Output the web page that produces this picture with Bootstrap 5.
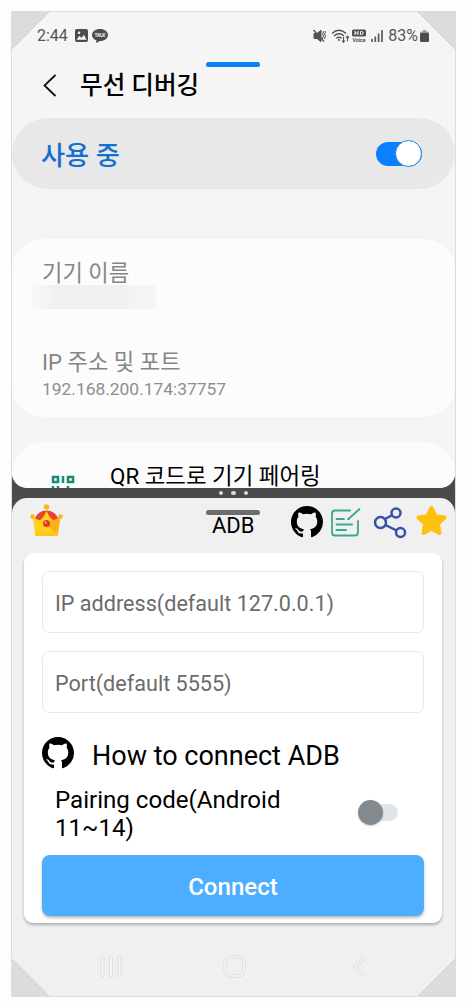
<!DOCTYPE html>
<html lang="ko">
<head>
<meta charset="utf-8">
<meta name="viewport" content="width=device-width, initial-scale=1">
<title>ADB</title>
<link href="https://cdn.jsdelivr.net/npm/bootstrap@5.3.0/dist/css/bootstrap.min.css" rel="stylesheet">
<style>
body{background:#fdfdfd;font-family:Roboto,"Noto Sans CJK KR",sans-serif;color:#000;overflow:hidden}
svg{display:block;flex:none}
.phone{width:445px;height:986px;margin:11px 0 0 11px;background:#4b4b4b;border:1px solid #dcdcdc;overflow:hidden;line-height:1}
.fold{width:40px;height:40px}
.fold-tl{left:-1px;top:-1px}.fold-tr{right:-1px;top:-1px}.fold-bl{left:-1px;bottom:-1px}.fold-br{right:-1px;bottom:-1px}
.pane-top{height:476px;background:#f5f5f5;border-radius:0 0 15px 15px}
.pane-bottom{height:498px;background:#f0f0f0;border-radius:15px 15px 0 0}
.divider{height:10px;gap:8px}
.divider i{width:4.5px;height:4.5px;border-radius:50%;background:#d9d9d9}
.statusbar{height:47px;padding:0 26px 0 25px;font-size:16px;color:#555}
.handle{width:54px;height:5px;border-radius:3px}
.handle-blue{background:#0b81f1;top:50px;left:194px}
.handle-gray{background:#6c6c6c;top:12px;left:194px}
.titlebar{height:59px;padding:0 0 7px 31px;gap:23px}
.titlebar h1{font-size:24.6px;font-weight:500;line-height:1;padding-top:3px}
.using{height:71px;border-radius:36px;background:#e8e8e8;padding:0 33px 0 29px;color:#146fd0;font-size:26.2px;font-weight:500}
.toggle-on{width:46px;height:24px;border-radius:12px;background:#0a80ff}
.toggle-on b{width:27px;height:27px;border-radius:50%;background:#fff;border:1px solid #2383e0}
.panel{background:#fcfcfc;border-radius:32px}
.info{margin-top:50px;height:178px;padding:22px 29px 0 30px;color:#868686}
.info-label{font-size:22.2px;line-height:24px;white-space:nowrap}
.redacted{width:124px;height:24px;margin:0 0 0 -10px;background:linear-gradient(90deg,#f8f8f8,#f0f0f0 20%,#f0f0f0 70%,#f7f7f7)}
.info-value{font-size:17.4px;line-height:20px;white-space:nowrap;color:#8e8e8e}
.pair{margin-top:25px;height:90px;padding:21px 0 0 39px;font-size:22.4px;gap:35px}
.appbar{height:55px;padding:0 8px 0 18px}
.appname{left:200px;top:14px;font-size:22px;line-height:27px}
.form-panel{width:418px;height:370px;margin-left:12px;padding:18px 18px 0;background:#fff;border-radius:9px;box-shadow:0 2px 3px rgba(0,0,0,.27)}
.field{height:62px;border:1.5px solid #e9e9e9;border-radius:7px;padding:2px 12px 0;font-size:21.6px;color:#6b6b6b;box-shadow:none}
.field::placeholder{color:#6b6b6b;opacity:1}
.howto{height:46px;font-size:27px;gap:18px;margin-top:17px}
.pairing{height:61px;padding:0 26px 0 13px;font-size:24.1px;line-height:28px}
.toggle-off{width:40px;height:25px}
.toggle-off u{width:32px;height:17px;border-radius:9px;background:#e1e5e9;right:0;top:4px}
.toggle-off b{width:25px;height:25px;border-radius:50%;background:#82898f;left:0;top:0;box-shadow:0 1px 2px rgba(0,0,0,.2)}
.connect{height:61px;border-radius:8px;background:#4daeff;color:#fff;font-size:24.1px;font-weight:500;padding-top:10px;box-shadow:0 2px 3px rgba(0,0,0,.27);border:0}
.navkeys{height:73px;padding:14px 88px 0 88px}
</style>
</head>
<body>
<svg width="0" height="0" class="position-absolute"><defs>
<path id="gh" d="M8 0C3.58 0 0 3.58 0 8c0 3.54 2.29 6.53 5.47 7.59.4.07.55-.17.55-.38 0-.19-.01-.82-.01-1.49-2.01.37-2.53-.49-2.69-.94-.09-.23-.48-.94-.82-1.13-.28-.15-.68-.52-.01-.53.63-.01 1.08.58 1.23.82.72 1.21 1.87.87 2.33.66.07-.52.28-.87.51-1.07-1.78-.2-3.64-.89-3.64-3.95 0-.87.31-1.59.82-2.15-.08-.2-.36-1.02.08-2.12 0 0 .67-.21 2.2.82.64-.18 1.32-.27 2-.27s1.36.09 2 .27c1.53-1.04 2.2-.82 2.2-.82.44 1.1.16 1.92.08 2.12.51.56.82 1.27.82 2.15 0 3.07-1.87 3.75-3.65 3.95.29.25.54.73.54 1.48 0 1.07-.01 1.93-.01 2.2 0 .21.15.46.55.38A8.01 8.01 0 0 0 16 8c0-4.42-3.58-8-8-8z"/>
</defs></svg>

<main class="phone position-relative">
  <section class="pane-top overflow-hidden position-relative">
    <div class="statusbar d-flex align-items-center">
      <span>2:44</span>
      <svg width="13" height="13" viewBox="0 0 13 13" style="margin-left:7px"><rect width="13" height="13" rx="2" fill="#4c4c4c"/><path d="M1.500 10.800 4.400 6.800 6.400 9 9 5.800l2.500 5z" fill="#f5f5f5"/><circle cx="4" cy="3.700" r="1.300" fill="#f5f5f5"/></svg>
      <svg width="16" height="14" viewBox="0 0 16 14" style="margin-left:4px"><path d="M8 0c4.500 0 8 2.600 8 6s-3.500 6-8 6l-4 2 .5-2.600C1.700 10.400 0 8.400 0 6c0-3.400 3.500-6 8-6z" fill="#4c4c4c"/><text x="8" y="8" font-size="5" font-weight="700" text-anchor="middle" fill="#eee" textLength="11">TALK</text></svg>
      <svg class="ms-auto" width="13" height="14" viewBox="0 0 13 14" fill="none" stroke="#555"><path d="M1 4.500h3L8 1.200v11.600L4 9.500H1z" fill="#505050"/><path d="M.5 1 11 12.500" stroke-width="1.300"/><path d="M10 2q1 1 0 2t0 2 0 2 0 2M12 2q1 1 0 2t0 2 0 2 0 2"/></svg>
      <svg width="19" height="14" viewBox="0 0 19 14" fill="none" stroke="#555" stroke-width="1.400" style="margin-left:5px"><path d="M1 4.500q7-6.500 14 0M3 7q5-4.500 10 0M5.300 9.300q2.700-2.200 5.400 0"/><circle cx="8" cy="11" r="1" fill="#555" stroke="none"/><path d="M12.500 8v5M11 11.500l1.500 1.800 1.500-1.800M16.500 12.500v-5M15 9l1.500-1.800L18 9" stroke-width="1.100"/></svg>
      <svg width="14" height="14" viewBox="0 0 14 14" style="margin-left:2px"><rect y=".5" width="14" height="7" rx="1.500" fill="#505050"/><path d="M3 2v4M6 2v4M3 4h3M8.500 2.500h1q1.700 0 1.700 1.500T9.500 5.500h-1z" fill="none" stroke="#f5f5f5"/><text x="7" y="12.500" font-size="5" font-weight="700" text-anchor="middle" fill="#505050" textLength="13" lengthAdjust="spacingAndGlyphs">Voice</text></svg>
      <svg width="12" height="12" viewBox="0 0 12 12" fill="none" stroke="#5a5a5a" stroke-width="1.700" style="margin-left:5px"><path d="M1 12V9M4.300 12V6.500M7.600 12V3.500M11 12V0"/></svg>
      <span style="margin-left:5px">83%</span>
      <svg width="9" height="12" viewBox="0 0 9 12" style="margin-left:2px"><path d="M3 0h3v1.500h1.500Q9 1.500 9 3H0q0-1.500 1.500-1.500H3z" fill="#999"/><rect y="3" width="9" height="9" rx="1" fill="#4c4c4c"/></svg>
    </div>
    <span class="handle handle-blue position-absolute"></span>
    <div class="titlebar d-flex align-items-center">
      <svg width="14" height="23" viewBox="0 0 14 23" fill="none" stroke="#111" stroke-width="1.800"><path d="M12.500 1 1.500 11.500 12.500 22"/></svg>
      <h1 class="mb-0">무선 디버깅</h1>
    </div>
    <div class="using d-flex align-items-center justify-content-between">
      <span style="padding-top:6px">사용 중</span>
      <span class="toggle-on d-flex align-items-center justify-content-end"><b></b></span>
    </div>
    <div class="panel info">
      <div class="info-label">기기 이름</div>
      <div class="redacted"></div>
      <div class="info-label" style="margin-top:41px">IP 주소 및 포트</div>
      <div class="info-value" style="margin-top:5px">192.168.200.174:37757</div>
    </div>
    <div class="panel pair d-flex align-items-start">
      <svg width="24" height="24" viewBox="0 0 24 24" fill="none" stroke="#188b77" stroke-width="2.500" style="margin-top:12px"><path d="M2 2h5v5H2zM17 2h5v5h-5zM12 1v7M2 11v8M7 11v3M17 11v8M12 14v6"/></svg>
      <span style="padding-top:2px">QR 코드로 기기 페어링</span>
    </div>
  </section>
  <div class="divider d-flex align-items-center justify-content-center"><i></i><i></i><i></i></div>
  <section class="pane-bottom position-relative">
    <span class="handle handle-gray position-absolute"></span>
    <header class="appbar d-flex align-items-start">
      <svg width="33" height="33" viewBox="0 0 33 33" style="margin-top:6px"><path d="M4.500 15Q8 6.500 16.500 6.500T28.500 15L24 20H9z" fill="#e8442e"/><path d="M2.500 12.500Q8 17 11 15.500 14.500 12 16.500 7q2 5 5.500 8.500 3 1.500 8.500-3L27.500 32h-22z" fill="#ffd21f"/><path d="M16.500 19.500 22 15.500q3 1.500 8.500-3L27.500 32z" fill="#ffae18"/><path d="M5.500 28.500h22V32h-22z" fill="#ffc41d"/><g fill="#f6b91b"><circle cx="16.500" cy="3" r="2.700"/><circle cx="2.500" cy="12.500" r="2.300"/><circle cx="30.500" cy="12.500" r="2.300"/></g><circle cx="16.500" cy="19.500" r="3.500" fill="#dc3d2b"/><circle cx="15.500" cy="18.500" r="1.200" fill="#ff8b67"/></svg>
      <span class="appname position-absolute">ADB</span>
      <svg class="ms-auto" width="32" height="32" viewBox="0 0 16 16" style="margin-top:8px"><use href="#gh"/></svg>
      <svg width="31" height="30" viewBox="0 0 31 30" fill="none" stroke="#3ba68f" stroke-width="1.800" stroke-linecap="round" style="margin:9px 0 0 7px"><path d="M20 3.500H5Q2 3.500 2 6.500v19q0 3 3 3h20q3 0 3-3V14M19.500 11 29.500 2M6.500 12H14M6.500 17.500H22M18 12h1M6.500 23H16"/></svg>
      <svg width="34" height="33" viewBox="0 0 34 33" fill="none" stroke="#3850a8" stroke-width="2.500" style="margin:8px 0 0 12px"><circle cx="7.500" cy="16.500" r="5.500"/><circle cx="23" cy="7" r="4.500"/><circle cx="27.500" cy="26.500" r="4.500"/><path d="m12 13 7.500-4M12.500 19l11 5.500"/></svg>
      <svg width="31" height="32" viewBox="0 0 31 32" style="margin:7px 0 0 9px"><path d="m15.500 3 4 8.300 9 1.200-6.600 6.300L23.500 28l-8-4.500-8 4.500 1.600-9.200L2.500 12.500l9-1.200z" fill="#ffc10d" stroke="#ffc10d" stroke-width="4" stroke-linejoin="round"/></svg>
    </header>
    <form class="form-panel" onsubmit="return false">
      <input class="form-control field" placeholder="IP address(default 127.0.0.1)">
      <input class="form-control field" placeholder="Port(default 5555)" style="margin-top:18px">
      <div class="howto d-flex align-items-center">
        <svg width="32" height="32" viewBox="0 0 16 16"><use href="#gh"/></svg>
        <span style="padding-top:6px">How to connect ADB</span>
      </div>
      <div class="pairing d-flex align-items-center justify-content-between" style="margin-top:6px">
        <span style="padding-top:3px">Pairing code(Android<br>11~14)</span>
        <span class="toggle-off position-relative"><u class="position-absolute"></u><b class="position-absolute"></b></span>
      </div>
      <button class="btn connect w-100" style="margin-top:12px">Connect</button>
    </form>
    <nav class="navkeys d-flex align-items-center justify-content-between">
      <svg width="22" height="23" viewBox="0 0 22 23" fill="#f5f5f5" stroke="#dedede"><rect x="1" y="1" width="3" height="21" rx="1.500"/><rect x="9.500" y="1" width="3" height="21" rx="1.500"/><rect x="18" y="1" width="3" height="21" rx="1.500"/></svg>
      <svg width="23" height="23" viewBox="0 0 23 23" fill="none" style="margin-right:6px"><rect x="2" y="2" width="19" height="19" rx="6" stroke="#dedede" stroke-width="3.500"/><rect x="2" y="2" width="19" height="19" rx="6" stroke="#f5f5f5" stroke-width="1.700"/></svg>
      <svg width="15" height="23" viewBox="0 0 15 23" fill="none"><path d="M13 2 3 11.500 13 21" stroke="#dedede" stroke-width="3.500"/><path d="M13 2 3 11.500 13 21" stroke="#f5f5f5" stroke-width="1.700"/></svg>
    </nav>
  </section>
  <svg class="fold fold-tl position-absolute" viewBox="0 0 40 40"><path d="M.5.500h38l-38 38z" fill="#dcdcdc" stroke="#cfcfcf"/></svg>
  <svg class="fold fold-tr position-absolute" viewBox="0 0 40 40"><path d="M39.500.500h-38l38 38z" fill="#dcdcdc" stroke="#cfcfcf"/></svg>
  <svg class="fold fold-bl position-absolute" viewBox="0 0 40 40"><path d="M.5 39.500h38L.5 1.500z" fill="#dcdcdc" stroke="#cfcfcf"/></svg>
  <svg class="fold fold-br position-absolute" viewBox="0 0 40 40"><path d="M39.500 39.500h-38l38-38z" fill="#dcdcdc" stroke="#cfcfcf"/></svg>
</main>
<script src="https://cdn.jsdelivr.net/npm/bootstrap@5.3.0/dist/js/bootstrap.bundle.min.js"></script>
</body>
</html>
